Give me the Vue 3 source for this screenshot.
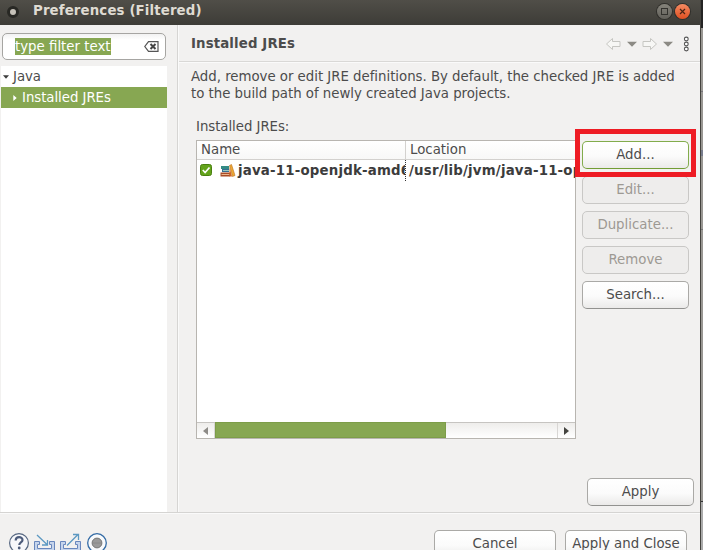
<script setup>
import { ref } from 'vue'

const filter = ref('type filter text')
const actions = [
  { label: 'Add...', focus: true },
  { label: 'Edit...', disabled: true },
  { label: 'Duplicate...', disabled: true },
  { label: 'Remove', disabled: true },
  { label: 'Search...' },
]
</script>

<template>
  <div class="screen">
    <div class="window">
      <header class="titlebar">
        <span class="app-dot"></span>
        <span class="title">Preferences (Filtered)</span>
        <span class="win-btn max"><svg width="15" height="15" viewBox="0 0 15 15"><rect x="4.5" y="4.5" width="6" height="6" fill="none" stroke="#33322e" /></svg></span>
        <span class="win-btn close"><svg width="15" height="15" viewBox="0 0 15 15"><path d="M5 5l5 5M10 5l-5 5" stroke="#4a2415" stroke-width="1.2" /></svg></span>
      </header>

      <div class="main">
        <aside class="sidebar">
          <div class="search">
            <span class="selected">{{ filter }}</span>
            <svg width="15" height="11" viewBox="0 0 15 11"><path d="M4.5.7H14v9.6H4.500L.8 5.500z" fill="#fff" stroke="#555" stroke-width="1.200" /><path d="M6.500 3l5 5M11.500 3l-5 5" stroke="#444" stroke-width="2" /></svg>
          </div>
          <nav class="tree">
            <div class="node root"><svg width="6" height="4" viewBox="0 0 6 4"><path d="M0 .3h6L3 3.7z" fill="#3c3c3c" /></svg><span>Java</span></div>
            <div class="node active"><svg width="4" height="6" viewBox="0 0 4 6"><path d="M.3 0v6L3.7 3z" fill="#fff" /></svg><span>Installed JREs</span></div>
          </nav>
        </aside>

        <section class="page">
          <div class="page-head">
            <h1>Installed JREs</h1>
            <svg class="nav-icons" width="84" height="18" viewBox="0 0 84 18">
              <g fill="#f7f7f5" stroke="#c6c6c2" stroke-linejoin="round">
                <path d="M.5 9l6-5.500V6.500h7.500v5H6.500v3z" />
                <path d="M50.500 9l-6-5.500V6.500H37v5h7.500v3z" />
              </g>
              <path d="M21 6.700h10L26 11.700zM57 6.700h10L62 11.700z" fill="#8c8a84" />
              <g fill="#fff" stroke="#555" stroke-width="1.100"><circle cx="80.300" cy="4" r="1.900" /><circle cx="80.300" cy="9" r="1.900" /><circle cx="80.300" cy="14" r="1.900" /></g>
            </svg>
          </div>
          <div class="content">
            <p class="desc"><span>Add, remove or edit JRE definitions. By default, the checked JRE is added</span><span>to the build path of newly created Java projects.</span></p>
            <div class="label">Installed JREs:</div>
            <div class="workarea">
              <div class="table">
                <div class="row head"><div class="cell name">Name</div><div class="cell">Location</div></div>
                <div class="row body">
                  <div class="cell name">
                    <svg class="check" width="12" height="12" viewBox="0 0 12 12"><rect x=".5" y=".5" width="11" height="11" rx="2" fill="#63a31b" stroke="#4a8010" /><path d="M2.800 6l2.300 2.500 4.400-5" fill="none" stroke="#fff" stroke-width="1.700" /></svg>
                    <svg class="books" width="16" height="14" viewBox="0 0 16 14"><path d="M1 2h8v3H1z" fill="#348b85" /><path d="M2 5h7v3H2z" fill="#356f93" /><path d="M3 6h6v1H3z" fill="#9ac8bb" /><path d="M.500 8.500H10v4H.500z" fill="#a84b25" /><path d="M1.500 10h8v1h-8z" fill="#e9b58d" /><path d="M9.500 1.500l2-1L15 11.500l-2.500 1z" fill="#edaa35" stroke="#b96c1c" stroke-width=".6" /><path d="M9.500 3v9.500h2.500z" fill="#cf6723" /></svg>
                    <span>java-11-openjdk-amd64</span>
                  </div>
                  <div class="cell location">/usr/lib/jvm/java-11-openjdk-amd64</div>
                </div>
                <div class="scrollbar">
                  <span class="step left"><svg width="5" height="8" viewBox="0 0 5 8"><path d="M5 0v8L0 4z" fill="#8d8b87" /></svg></span>
                  <span class="thumb"></span>
                  <span class="track"></span>
                  <span class="step right"><svg width="5" height="8" viewBox="0 0 5 8"><path d="M0 0v8l5-4z" fill="#44443f" /></svg></span>
                </div>
              </div>
              <div class="actions">
                <button v-for="a in actions" :key="a.label" class="btn" :class="{ focus: a.focus }" :disabled="a.disabled">{{ a.label }}</button>
                <span class="highlight"></span>
              </div>
            </div>
            <div class="apply"><button class="btn">Apply</button></div>
          </div>
        </section>
      </div>

      <footer class="footer">
        <svg class="foot-icons" width="100" height="22" viewBox="0 0 100 22">
          <circle cx="11" cy="11" r="9.400" fill="#f7f8fb" stroke="#566781" stroke-width="1.200" />
          <path d="M7.700 8.500c0-4.400 6.800-4.200 6.800-.6 0 2.500-3.200 2.500-3.200 5" fill="none" stroke="#4d5c7b" stroke-width="2.200" /><circle cx="11.200" cy="16" r="1.400" fill="#4d5c7b" />
          <g fill="#c6d5ec" stroke="#6987bd">
            <path d="M26.500 9.500h5v3h-2v4h14v-4h-2v-3h5v10h-20z" />
            <path d="M52.500 9.500h5v3h-2v4h14v-4h-2v-3h5v10h-20z" />
          </g>
          <g fill="none" stroke="#5d99c2" stroke-width="1.300"><path d="M29 3l10 9.500M39.500 8v5H34" /><path d="M59 13.500l11-11M65 2.500h5.500V8" /></g>
          <circle cx="89" cy="11" r="9.300" fill="#f8fafc" stroke="#346ba5" stroke-width="1.300" /><circle cx="89" cy="11" r="4.900" fill="#999" stroke="#777" /><path d="M85 11h8" stroke="#888" />
        </svg>
        <button class="btn wide">Cancel</button>
        <button class="btn wide">Apply and Close</button>
      </footer>
    </div>
    <div class="behind"></div>
  </div>
</template>

<style>
body { overflow: hidden; }
</style>

<style scoped>
* { box-sizing: border-box; }
.screen { display: flex; width: 703px; height: 550px; overflow: hidden; font: 13.33px/17px "DejaVu Sans", sans-serif; color: #4c4c4c; background: #f2f1f0; }
.window { width: 700px; height: 550px; display: flex; flex-direction: column; overflow: hidden; }
.behind { width: 3px; border-left: 1px solid #44433f; background: linear-gradient(#242424 0 28px, #999793 28px 91px, #77757a 91px 92px, #999793 92px 150px, #777c8c 150px 156px, #999793 156px 229px, #777 229px 230px, #999793 230px 501px, #333 501px 502px, #aaa 502px); }
.titlebar { flex: 0 0 25px; display: flex; align-items: center; padding: 0 10px 2px 7px; background: linear-gradient(#504e48, #3d3c37); color: #dfdbd2; font-weight: bold; }
.app-dot { width: 12px; height: 12px; border: 3px solid #282824; border-radius: 50%; background: #c6c2b9; }
.title { margin: 0 0 2px 14px; flex: 1; white-space: nowrap; letter-spacing: .13px; }
.win-btn { width: 15px; height: 15px; margin-left: 3px; border-radius: 50%; box-shadow: 0 0 0 1px #302f2b; }
.win-btn svg { display: block; }
.max { background: linear-gradient(#85837b, #62605a); }
.close { background: linear-gradient(#f58b62, #df4f21); }
.main { height: 487px; display: flex; flex: none; }
.sidebar { flex: 0 0 178px; padding: 8px 10px 0 1px; border-right: 1px solid #d6d5d3; display: flex; flex-direction: column; }
.search { width: 164px; height: 27px; margin: 0 0 6px 1px; padding: 0 6px 0 12px; display: flex; align-items: center; justify-content: space-between; border: 1px solid #a6a5a2; border-radius: 5px; background: linear-gradient(#f2f2f2, #fff 6px); flex: none; }
.selected { background: #87a752; color: #fff; white-space: nowrap; }
.tree { flex: 1; width: 166px; background: #fff; }
.node { height: 21px; display: flex; align-items: center; letter-spacing: -.05px; }
.root { padding-left: 2px; gap: 4px; }
.active { background: #87a752; color: #fff; padding-left: 12px; gap: 5px; }
.page { width: 522px; border-left: 1px solid #fafafa; display: flex; flex-direction: column; }
.page-head { height: 37px; flex: none; display: flex; align-items: center; justify-content: space-between; padding: 0 10px 0 12px; border-bottom: 1px solid #d9d8d6; }
h1 { margin: 0; font-size: 13.33px; line-height: 17px; letter-spacing: .12px; }
.nav-icons { margin-top: 1px; }
.content { flex: 1; padding: 5px 0 0 12px; border-top: 1px solid #fafafa; }
.desc { margin: 0; height: 34px; white-space: nowrap; letter-spacing: -.025px; }
.desc span { display: block; }
.label { margin: 16px 0 0 5px; height: 22px; letter-spacing: -.05px; }
.workarea { display: flex; gap: 6px; margin: 0 0 39px 5px; }
.table { width: 380px; height: 299px; border: 1px solid #b8b5b0; background: #fff; display: flex; flex-direction: column; }
.row { display: grid; grid-template-columns: 209px 169px; white-space: nowrap; }
.cell { overflow: hidden; padding-left: 4px; }
.head { height: 19px; border-bottom: 1px solid #d3d1ce; background: linear-gradient(#fff, #f8f8f7); }
.head .name { border-right: 1px solid #d3d1ce; }
.body { height: 21px; font-weight: bold; color: #3c3c3c; line-height: 20px; letter-spacing: .2px; }
.body .cell { display: flex; align-items: center; }
.body .name { border-right: 1px dotted #333; }
.location { padding-left: 3px; }
.check { flex: none; margin: 0 0 1px -1px; }
.books { flex: none; margin: 0 2px 0 8px; }
.scrollbar { display: flex; height: 16px; margin-top: auto; border-top: 1px solid #c6c4c1; background: linear-gradient(#eeedeb, #fff); }
.step { width: 18px; display: flex; align-items: center; justify-content: center; }
.left { border-right: 1px solid #d8d6d4; }
.right { border-left: 1px solid #d8d6d4; }
.thumb { width: 231px; margin-top: -1px; background: #87a752; border: 1px solid #7d9d49; }
.track { flex: 1; }
.actions { position: relative; display: flex; flex-direction: column; gap: 7px; padding-top: 1px; }
.btn { appearance: none; width: 107px; height: 28px; flex: none; padding: 0 0 2px; border: 1px solid #aaa9a6; border-bottom-color: #929290; border-radius: 5px; background: linear-gradient(#fff, #fbfbfb 55%, #ebeae9); color: #4c4c4c; font: 13.33px/17px "DejaVu Sans", sans-serif; white-space: nowrap; }
.btn:disabled { color: #9d9993; background: #eeedec; border-color: #c9c8c6; }
.focus { border-color: #82ac4c; border-bottom-color: #729d35; }
.highlight { position: absolute; left: -7px; top: -11px; width: 121px; height: 48px; border: 5px solid #ee1c24; pointer-events: none; }
.apply { display: flex; justify-content: flex-end; padding-right: 6px; }
.footer { height: 38px; flex: none; display: flex; align-items: flex-start; border-top: 1px solid #d5d4d2; box-shadow: inset 0 1px #fafafa; padding: 17px 13px 0 8px; gap: 9px; }
.foot-icons { margin-right: auto; margin-top: 2px; }
.wide { width: 122px; }
</style>
